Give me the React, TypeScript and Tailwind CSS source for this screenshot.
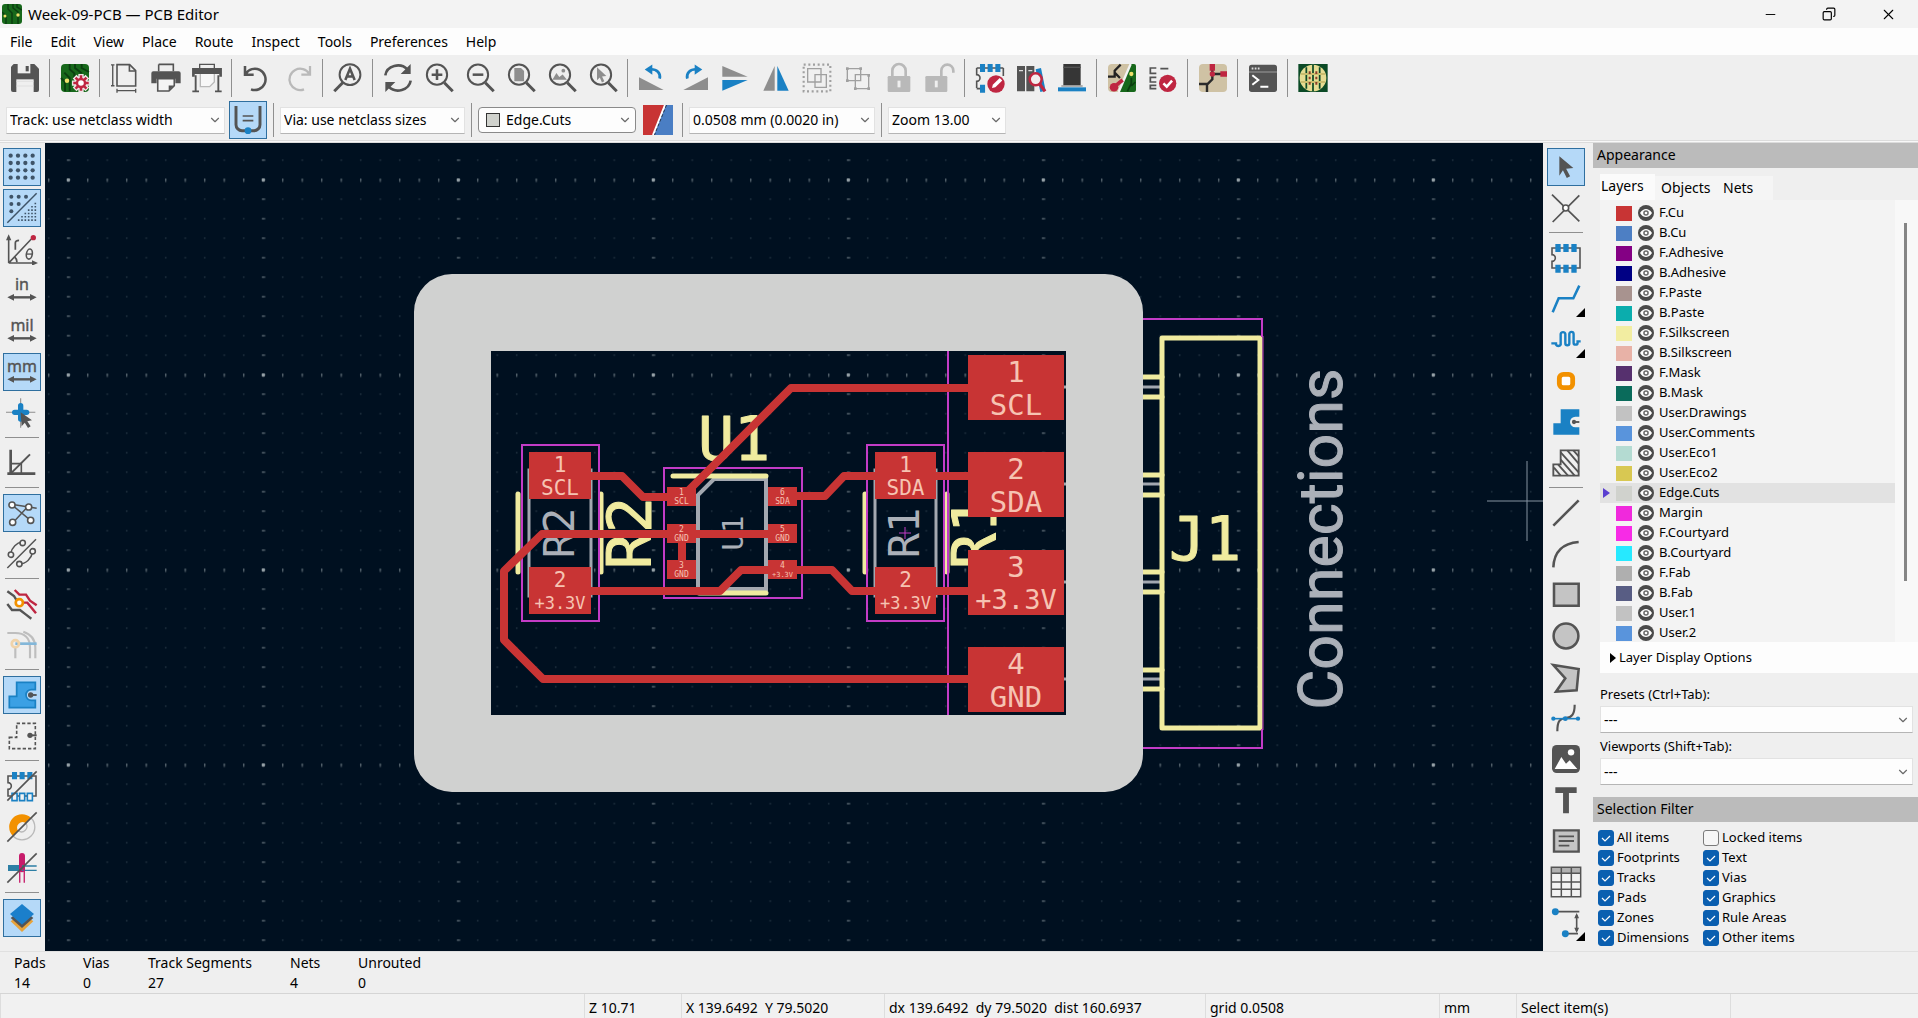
import React from "react";
import { ChevronDown, Copy, Minus, X } from "lucide-react";

const DARK = "#545454";
const BLUE = "#1a81c4";
const RED = "#bf2641";
const GRAY = "#b9b9b9";
const COPPER = "#c83434";
const SILK = "#f0eb9f";
const FAB = "#a3a8b0";
const COURTYARD = "#c33cc6";
const PAD_TEXT = "#f6c3b2";

const magnifier = (
  <g fill="none" stroke={DARK}>
    <circle cx="10.500" cy="9.500" r="7.600" strokeWidth="1.500" />
    <path d="M16 15.500 22.300 22" strokeWidth="2.200" />
  </g>
);

const zoneShape = "M2.500 13h5.500V2.500h14V8h-3a4 4 0 1 0 0 8h3v5.500h-19.500z";

const icons: Record<string, React.ReactNode> = {
  save: (
    <>
      <path d="M3.500 1.500H19l3.500 3.500v16a1.500 1.500 0 0 1-1.500 1.500H3A1.500 1.500 0 0 1 1.500 21V3.500z" fill={DARK} />
      <path d="M6.500 1.500h9.500v7H6.500z" fill="#efefef" />
      <path d="M12.500 3h2.300v4h-2.300z" fill={DARK} />
      <path d="M5.500 13h13v9.500h-13z" fill="#efefef" />
      <path d="M5.500 14.500h13M5.500 18h13" stroke="#dcdcdc" strokeWidth=".6" />
    </>
  ),
  boardSetup: (
    <>
      <rect x="1.500" y="1.500" width="21" height="21" rx="3" fill="#17681b" />
      <path d="M8 1.500v4l3.500 3v5M12 1.500v3l5 4M4 8l4 4v10M1.500 12l3 3v7M17 1.500v3l5.500 3" fill="none" stroke="#0b3f10" strokeWidth="1.400" />
      <circle cx="6" cy="14" r="1.700" fill="#efe06a" />
      <path d="M16.500 9v13.600M9.700 15.800h13.600M11.700 11l9.600 9.600M21.300 11l-9.600 9.600" stroke="#efe6e6" strokeWidth="4" />
      <path d="M16.500 10v11.600M10.700 15.800h11.600M12.400 11.700l8.200 8.200M20.600 11.700l-8.200 8.200" stroke={RED} strokeWidth="1.900" />
      <circle cx="16.500" cy="15.800" r="3" fill="#fff" stroke={RED} strokeWidth="1.800" />
    </>
  ),
  page: (
    <g fill="none" stroke={DARK}>
      <path d="M6 2h9.500l4.500 4.500V18H6z" strokeWidth="1.200" />
      <path d="M15.300 2v4.700H20" strokeWidth="1.200" />
      <path d="M2.800 2v16M1.500 2.200h2.600M1.500 17.800h2.600M6 21.500h14M6 20v3M20 20v3" />
    </g>
  ),
  print: (
    <>
      <path d="M6.500 1.800h11V7" fill="none" stroke={DARK} strokeWidth="1.200" />
      <path d="M6.500 1.800V7" stroke={DARK} strokeWidth="1.200" />
      <path d="M2.500 7h19A1.500 1.500 0 0 1 23 8.500V16h-4v-3.500H5V16H1V8.500A1.500 1.500 0 0 1 2.500 7z" fill={DARK} />
      <path d="M5.800 12.500h12.400v5.300l-4 4H5.800z" fill="#f4f4f4" stroke={DARK} strokeWidth="1.200" />
      <path d="M18 17.600h-4v4z" fill={DARK} />
    </>
  ),
  plot: (
    <>
      <path d="M6.500 5V1.800h11V5" fill="none" stroke={DARK} />
      <path d="M.8 4.500h22.400V11h-2v-2H2.800v2h-2z" fill={DARK} />
      <path d="M7 9v9.500h7l3.500-3.500V9" fill="#f7f7f7" stroke={GRAY} />
      <path d="M3.500 10v11.800M20.500 10v11.800M1 22h5M18 22h5" stroke={DARK} strokeWidth="1.400" />
    </>
  ),
  undo: <path d="M3 3v6.500h6.500M3.500 9a8 8 0 1 1 4 11.500" fill="none" stroke={DARK} strokeWidth="1.900" />,
  redo: <path d="M21 3v6.500h-6.500M20.500 9a8 8 0 1 0-4 11.500" fill="none" stroke={GRAY} strokeWidth="1.700" />,
  find: (
    <>
      <g fill="none" stroke={DARK}>
        <circle cx="13.500" cy="9.500" r="7.800" strokeWidth="1.500" />
        <path d="M8 15.500 1.700 22" strokeWidth="2.200" />
      </g>
      <path d="M10 13.500l3.500-8.500 3.500 8.500M11.200 10.800h4.600" fill="none" stroke={DARK} strokeWidth="1.900" />
    </>
  ),
  refresh: (
    <>
      <path d="M2.500 10A9.500 8.500 0 0 1 19 5.500M21.500 14A9.500 8.500 0 0 1 5 18.500" fill="none" stroke={DARK} strokeWidth="2" />
      <path d="M21.500 1.500V9H14zM2.500 22.500V15H10z" fill={DARK} />
    </>
  ),
  zoomIn: (
    <>
      {magnifier}
      <path d="M6.500 9.500h8M10.500 5.500v8" stroke={DARK} strokeWidth="1.900" />
    </>
  ),
  zoomOut: (
    <>
      {magnifier}
      <path d="M6.500 9.500h8" stroke={DARK} strokeWidth="1.900" />
    </>
  ),
  zoomFit: (
    <>
      {magnifier}
      <path d="M7 4.500h5l2.300 2.300v7.700H7z" fill="#8e8e8e" />
    </>
  ),
  zoomObjects: (
    <>
      {magnifier}
      <path d="M4.800 13.300l3-5 2.200 3 2.500-2 3.200 4z" fill="#8e8e8e" />
      <circle cx="13" cy="6.500" r="1.400" fill="#8e8e8e" />
    </>
  ),
  zoomSelection: (
    <>
      {magnifier}
      <path d="M7.500 4l7 6.500-3.200.3 1.700 3.700-1.800.8-1.600-3.700-2.100 2z" fill="#8e8e8e" />
    </>
  ),
  rotateLeft: (
    <>
      <path d="M1.500 11.500v9.500H20z" fill="#8e8e8e" />
      <path d="M17 12.500c1-4-2-7.500-7.500-7" fill="none" stroke={BLUE} strokeWidth="2" />
      <path d="M11.500 1.800v7.800L5.800 5.700z" fill={BLUE} />
    </>
  ),
  rotateRight: (
    <>
      <path d="M22.500 11.500v9.500H4z" fill="#8e8e8e" />
      <path d="M7 12.500c-1-4 2-7.500 7.500-7" fill="none" stroke={BLUE} strokeWidth="2" />
      <path d="M12.500 1.800v7.800l5.700-3.900z" fill={BLUE} />
    </>
  ),
  mirrorV: (
    <>
      <path d="M2.500 3v8h19z" fill="#8e8e8e" />
      <path d="M2.500 21.500v-8h19z" fill={BLUE} />
    </>
  ),
  mirrorH: (
    <>
      <path d="M2.500 21.500h8.500V3z" fill="#8e8e8e" />
      <path d="M21.500 21.500H13V3z" fill={BLUE} />
    </>
  ),
  group: (
    <g fill="none" stroke="#a0a0a0">
      <rect x="2" y="2" width="20" height="20" strokeWidth="1.600" strokeDasharray="1.500 2" />
      <path d="M5 5h10v10H5zM10.500 9.500H19V19h-8.500z" fill="#f0f0f0" />
    </g>
  ),
  ungroup: (
    <g fill="#f0f0f0" stroke="#a0a0a0">
      <path d="M4 5h10v9H4zM10 9.500h10V20H10z" />
      <path d="M3 4h2v2H3zM13 4h2v2h-2zM3 13h2v2H3zM19 9h2v2h-2zM9 19h2v2H9zM19 19h2v2h-2z" fill="#a0a0a0" stroke="none" />
    </g>
  ),
  lock: (
    <>
      <path d="M7 11V6.500a5 5 0 0 1 10 0V11" fill="none" stroke={GRAY} strokeWidth="2" />
      <rect x="3.500" y="10.500" width="17" height="12" rx="1" fill={GRAY} />
      <path d="M12 14v5" stroke="#efefef" strokeWidth="2.200" />
    </>
  ),
  unlock: (
    <>
      <path d="M13 11V6.500a4.500 4.500 0 0 1 9 0V8" fill="none" stroke={GRAY} strokeWidth="2" />
      <rect x="1" y="10.500" width="16.500" height="12" rx="1" fill={GRAY} />
      <path d="M9.200 14v5" stroke="#efefef" strokeWidth="2.200" />
    </>
  ),
  footprintEditor: (
    <>
      <path d="M2 4.500v5a2.500 2.500 0 0 1 0 5v5M22 4.500v6" fill="none" stroke={DARK} strokeWidth="1.200" />
      <path d="M2 4.500h20M2 20h6" stroke={DARK} strokeWidth="1.200" />
      <path d="M4.500 1.500h3.800v6H4.500zM10.200 1.500H14v6h-3.800zM16 1.500h3.800v6H16zM4.500 17h3.800v6H4.500z" fill={BLUE} />
      <circle cx="16.500" cy="16.500" r="6.500" fill={RED} />
      <path d="M13.500 19.500l.6-2.500 5.200-5 1.900 1.900-5.200 5z" fill="#fff" />
    </>
  ),
  library: (
    <>
      <path d="M1.500 3h6v19h-6zM8.500 3h6v19h-6z" fill={DARK} />
      <path d="M15.500 5.500l4-1 3.500 17-4 1z" fill={BLUE} />
      <path d="M3 6.500h3M10 6.500h3" stroke="#ddd" />
      <circle cx="15.500" cy="13" r="4.500" fill="#f3eeee" stroke={RED} strokeWidth="1.900" />
      <path d="M18.500 16.500l4 5.500" stroke={RED} strokeWidth="2.400" />
    </>
  ),
  viewer3d: (
    <>
      <path d="M5.500 1.500h13v16h-13z" fill="#363636" />
      <path d="M5.500 4h13" stroke={DARK} />
      <path d="M1.500 19h21v3h-21z" fill={BLUE} />
      <path d="M4 18h16" stroke="#8e8e8e" />
    </>
  ),
  updatePcb: (
    <>
      <rect x="1.500" y="1.500" width="21" height="21" rx="3" fill="#cfc2a4" />
      <path d="M18 1.500h3a1.500 1.500 0 0 1 1.500 1.500v18a1.500 1.500 0 0 1-1.500 1.500H10z" fill="#17681b" />
      <path d="M18.500 1.500L9.500 22.500" stroke="#f4f4f4" strokeWidth="1.800" />
      <path d="M16 22l3-6v-4M22 15l-3 3" stroke="#0b3f10" strokeWidth="1.300" fill="none" />
      <path d="M1.500 11h5V6.500L11 2M6.500 8l4 4" stroke="#222" strokeWidth="1.700" fill="none" />
      <circle cx="6" cy="19" r="3.200" fill={RED} />
      <path d="M7.500 17.500l5-4" stroke={RED} strokeWidth="2.800" />
      <circle cx="19" cy="9" r="1.600" fill="#efe06a" />
    </>
  ),
  drc: (
    <>
      <path d="M7 4.500H2.500v4H7M7 11.500H2.500v3.500H7M7 17.500H2.500V20H7M10 5h6" fill="none" stroke={DARK} strokeWidth="1.300" />
      <circle cx="15.500" cy="16" r="6.500" fill={RED} />
      <path d="M12.300 16l2.500 2.500 4-4.500" fill="none" stroke="#fff" strokeWidth="1.900" />
    </>
  ),
  schematic: (
    <>
      <rect x="1.500" y="1.500" width="21" height="21" rx="3" fill="#cfc2a4" />
      <path d="M1.500 16.500h6v6M7.500 17l4-4v-4M11.500 9V1.500M11.500 9h11" stroke="#2b2b2b" strokeWidth="1.800" fill="none" />
      <path d="M9.500 1.500h4v5h-4zM17.500 7h5v4h-5z" fill={RED} />
      <circle cx="11.500" cy="9" r="2" fill={RED} />
    </>
  ),
  console: (
    <>
      <rect x="1.500" y="2" width="21" height="20.500" rx="2" fill={DARK} />
      <path d="M3.500 4.800h6" stroke="#ddd" strokeWidth="1.500" strokeDasharray="1.300 1" />
      <path d="M1.500 7.500h21" stroke="#999" strokeWidth=".8" />
      <path d="M4 10l4.500 3.500L4 17M10 18.500h6" fill="none" stroke="#fff" strokeWidth="1.500" />
    </>
  ),
  roundTracks: (
    <>
      <path d="M1 1.500h22v21H1z" fill="#0b4a26" />
      <circle cx="12" cy="12" r="10" fill="#e5dc92" />
      <path d="M7 4v16M12 2v20M17 4v16" stroke="#0b4a26" strokeWidth="1.300" />
      <path d="M3 9h18M3 15h18" stroke="#c9bd6e" strokeWidth="1.400" />
      <path d="M9.500 7v2M9.500 11v2M9.500 15v2M14.500 7v2M14.500 11v2M14.500 15v2" stroke="#8c3d2a" strokeWidth="1.500" />
    </>
  ),
  autoTrack: (
    <>
      <path d="M3 1.500v14a4.500 4.500 0 0 0 4.500 4.500h9a4.500 4.500 0 0 0 4.500-4.500v-14" fill="none" stroke={DARK} strokeWidth="2.200" />
      <path d="M8 9h8M8 12.500h8" stroke={DARK} strokeWidth="1.200" />
      <circle cx="12" cy="20" r="2.500" fill={BLUE} />
    </>
  ),
  grid: (
    <g fill="#3f5468">
      {[3.5, 9, 14.5, 20].map((y) => [3.5, 9, 14.5, 20].map((x) => <circle key={`${x}-${y}`} cx={x} cy={y} r="1.600" />))}
    </g>
  ),
  gridOverride: (
    <>
      <path d="M1 23L23 1" stroke="#3f5468" strokeWidth="1.100" />
      <g fill="#3f5468">
        <circle cx="4" cy="3.500" r="1.500" />
        <circle cx="9.500" cy="3.500" r="1.500" />
        <circle cx="15" cy="3.500" r="1.500" />
        <circle cx="4" cy="9" r="1.500" />
        <circle cx="9.500" cy="9" r="1.500" />
        <circle cx="4" cy="14.500" r="1.500" />
      </g>
      <path d="M22 8v14M19.500 10.500V22M17 13v9M14.500 15.500V22M12 18v4M9.500 20.500V22" stroke="#3f5468" strokeWidth="1.200" strokeDasharray="1.200 1.300" />
    </>
  ),
  polar: (
    <>
      <path d="M2 22.500V3M2 22.500h20M2.500 22L19 4.500" fill="none" stroke={DARK} strokeWidth="1.200" />
      <path d="M2 1l2 4.500H0zM24 22.500l-4.500 2v-4z" fill={DARK} />
      <circle cx="20.500" cy="3.500" r="2" fill={RED} />
      <path d="M7 12.500V7.500c0-1.500 1-2 2.800-2M6.500 18c1.200 1 1.700 2.500 1.700 4" fill="none" stroke={DARK} strokeWidth="1.300" />
      <ellipse cx="17.500" cy="15.800" rx="2.200" ry="3.800" fill="none" stroke={DARK} strokeWidth="1.200" transform="rotate(10 17.500 15.800)" />
      <path d="M15.500 15.800h4" stroke={DARK} />
    </>
  ),
  cursor: (
    <>
      <path d="M11 1v22M0 11.500h22" stroke="#8e8e8e" strokeWidth=".8" />
      <path d="M11 6.500v10M6.500 11.500h9" stroke={BLUE} strokeWidth="4" strokeLinecap="round" />
      <path d="M11 11.500l8.500 6-3.500.7 2.500 3.800-2 1.300-2.400-4-2.400 2.700z" fill={DARK} />
    </>
  ),
  angle: (
    <>
      <path d="M3.500 2v18M1 20h21" stroke={DARK} strokeWidth="2" />
      <path d="M3.500 20L18 5.500" stroke={DARK} strokeWidth="1.500" />
      <path d="M4 12.500h7.500V20" fill="none" stroke={DARK} strokeWidth="1.200" />
    </>
  ),
  ratsnest: (
    <>
      <path d="M4 5.500l15.500 13M5 19.500L17 6.500M4 5.500l19 3" stroke={DARK} strokeWidth="1.100" />
      <g fill="#fff" stroke={DARK} strokeWidth="1.200">
        <circle cx="4.500" cy="6" r="2.300" />
        <circle cx="17" cy="7.500" r="2.300" />
        <circle cx="5" cy="19" r="2.300" />
        <circle cx="18.500" cy="17.500" r="2.300" />
      </g>
    </>
  ),
  curvedRatsnest: (
    <>
      <path d="M1 22.500L22.500 1M3.500 11.500C4.500 7 8 3.500 12 3M10 19.500c5 0 9-4 10-9" fill="none" stroke={DARK} strokeWidth="1.100" />
      <g fill="#f3f3f3" stroke={DARK} strokeWidth="1.200">
        <circle cx="3.700" cy="12.500" r="2" />
        <circle cx="12.500" cy="3.700" r="2" />
        <circle cx="10" cy="19.500" r="2" />
        <circle cx="20" cy="10" r="2" />
      </g>
    </>
  ),
  highContrast: (
    <>
      <path d="M1 2.500l5 3.500 3 5" fill="none" stroke={DARK} strokeWidth="1.800" />
      <path d="M6.500 1.500L10 5h5l3 4.500 5 3.500M11 11h5l6.500 8" fill="none" stroke={RED} strokeWidth="1.800" />
      <path d="M1 12l3.500 4.500h6l4.500 3.500 4 3" fill="none" stroke={DARK} strokeWidth="1.800" />
      <circle cx="10" cy="11" r="2.700" fill="#fff" stroke="#f29100" strokeWidth="2" />
    </>
  ),
  netHighlight: (
    <g opacity=".5" fill="none">
      <path d="M1 3h6c7 0 11 4 11 11v8M13 2c6 2 9 6 9 12v8M7 13v9" stroke="#8e8e8e" strokeWidth="1.600" />
      <path d="M7 11h16" stroke={BLUE} strokeWidth="2" />
      <circle cx="7" cy="11" r="2.700" stroke="#f2b866" strokeWidth="2" />
    </g>
  ),
  zoneFilled: (
    <>
      <path d={zoneShape} fill="#3ba0e4" stroke={BLUE} strokeWidth="1.300" />
      <path d="M18 12h5" stroke={DARK} strokeWidth="1.400" />
      <circle cx="18.500" cy="12" r="2" fill={DARK} />
    </>
  ),
  zoneOutline: (
    <>
      <path d="M2.500 13h5.500V2.500h14v19h-19.500z" fill="none" stroke={DARK} strokeWidth="1.200" strokeDasharray="2.500 1.500" />
      <path d="M18 11.500h5" stroke={DARK} strokeWidth="1.400" />
      <circle cx="18" cy="11.500" r="2" fill={DARK} />
    </>
  ),
  padSketch: (
    <>
      <path d="M1.500 4.500h21v15h-21v-5a2.500 2.500 0 0 0 0-5z" fill="none" stroke={DARK} strokeWidth="1.200" />
      <path d="M4.500 1.500h3.800v5.500H4.500zM10.200 1.500H14v5.500h-3.800zM16 1.500h3.800v5.500H16z" fill={BLUE} />
      <path d="M4.500 17.500h3.800V23H4.500zM10.200 17.500H14V23h-3.800zM16 17.500h3.800V23H16z" fill="#f3f3f3" stroke={BLUE} strokeWidth="1.200" />
      <path d="M1 23L23 1" stroke={DARK} strokeWidth="1.200" />
    </>
  ),
  viaSketch: (
    <>
      <path d="M5.200 18.800A9.300 9.300 0 0 1 18.800 5.200l-4 4a4 4 0 0 0-5.600 5.600z" fill="#f29100" />
      <path d="M5.200 18.800A9.300 9.300 0 0 0 18.800 5.200M9.200 14.800a4 4 0 0 0 5.600-5.600" fill="none" stroke="#b9b9b9" />
      <path d="M1 23L23 1" stroke={DARK} strokeWidth="1.200" />
    </>
  ),
  trackSketch: (
    <>
      <path d="M1.500 12H12" stroke="#2d7fa5" strokeWidth="4.500" />
      <path d="M12 13V3" stroke="#c71c6b" strokeWidth="4.500" strokeLinecap="round" />
      <path d="M12 10.500h11M12 13.800h11" stroke="#2d7fa5" />
      <path d="M10.300 13v10M13.700 13v10" stroke="#c71c6b" />
      <path d="M1 23L23 1" stroke={DARK} strokeWidth="1.200" />
    </>
  ),
  layers: (
    <>
      <path d="M12 8l8.500 6.500L12 22.500l-8.500-8z" fill="#e8a33a" />
      <path d="M12 5l8.500 7L12 19.500 3.500 12z" fill={DARK} />
      <path d="M12 1.500L21 9l-9 8-9-8z" fill="#1b7fcb" />
    </>
  ),
  arrow: <path d="M7 4l10.500 8.800-5.400.5 3 5.700-2.500 1.200-2.900-5.700L7 18.500z" fill={DARK} />,
  localRatsnest: (
    <>
      <path d="M1.500 2L22 22M22 2.500L2 22.500" stroke={DARK} strokeWidth="1.300" />
      <circle cx="11.800" cy="12" r="2.200" fill="#fff" stroke={DARK} strokeWidth="1.200" />
    </>
  ),
  footprint: (
    <>
      <path d="M1.500 4.500h21v15h-21v-5a2.500 2.500 0 0 0 0-5z" fill="none" stroke={DARK} strokeWidth="1.200" />
      <path d="M4 1.500h4v6H4zM10 1.500h4v6h-4zM16 1.500h4v6h-4zM4 17h4v6H4zM10 17h4v6h-4zM16 17h4v6h-4z" fill={BLUE} />
    </>
  ),
  route: <path d="M2 22l4.500-10.500h11L22 2" fill="none" stroke={BLUE} strokeWidth="1.900" />,
  tune: (
    <path
      d="M1 14.500h3.500v1a2 2 0 0 0 3.500 0v-8a1.800 1.800 0 0 1 3.500 0v7a1.500 1.500 0 0 0 3 0v-7a1.600 1.600 0 0 1 3.200 0v6.500a1.500 1.500 0 0 0 3 0v-1H23"
      fill="none"
      stroke={BLUE}
      strokeWidth="1.800"
    />
  ),
  via: <rect x="7" y="7" width="10" height="10" rx="3" fill="#fff" stroke="#f29100" strokeWidth="3.600" />,
  zone: (
    <>
      <path d={zoneShape} fill={BLUE} />
      <path d="M18 12h4" stroke={DARK} strokeWidth="1.400" />
      <circle cx="18" cy="12" r="1.600" fill={DARK} />
    </>
  ),
  ruleArea: (
    <g stroke={DARK} fill="none">
      <path d="M2.500 13h5.500V2.500h13.500v19h-19z" strokeWidth="1.400" />
      <path d="M8 4l13.500 15M13 2.500l8.500 10M8 9.500L18.500 21.500M6 13l7.500 8.500M3 15.500l5 6M17.500 2.500l4 4.500" strokeWidth="1.400" />
    </g>
  ),
  line: <path d="M2.500 21.500l19-19" stroke={DARK} strokeWidth="1.900" />,
  arc: <path d="M2.500 22C3 11 9 4 21.500 3" fill="none" stroke={DARK} strokeWidth="1.900" />,
  rect: <path d="M3 3.500h18.500v16.500H3z" fill="#c4c4c4" stroke={DARK} strokeWidth="1.900" />,
  circle: <circle cx="12" cy="12" r="9.300" fill="#c4c4c4" stroke={DARK} strokeWidth="1.900" />,
  polygon: <path d="M2.500 3l19 3-1.500 16-15.500 1 7-10z" fill="#c4c4c4" stroke={DARK} strokeWidth="1.900" />,
  bezier: (
    <>
      <path d="M5.500 22c0-8 2-9.500 6.500-10S18.500 9 18.500 2" fill="none" stroke={DARK} strokeWidth="1.600" />
      <path d="M1.500 12.500h20" stroke={BLUE} strokeWidth="1.200" />
      <g fill={BLUE}>
        <circle cx="2.500" cy="12.500" r="1.600" />
        <circle cx="11.500" cy="12.500" r="1.800" />
        <circle cx="21" cy="12.500" r="1.600" />
      </g>
    </>
  ),
  image: (
    <>
      <rect x="1.500" y="1.500" width="21" height="21" rx="3.500" fill={DARK} />
      <path d="M3.500 19.500l5-9 3.500 5 2.800-2.500 5.700 6.500z" fill="#fff" />
      <circle cx="15.800" cy="7" r="2.400" fill="#fff" />
    </>
  ),
  text: <path d="M4 2.500h16v4.200h-5.800v15.300H9.800V6.700H4z" fill={DARK} />,
  textBox: (
    <>
      <path d="M3 4h18.500v16H3z" fill="#c4c4c4" stroke={DARK} strokeWidth="1.800" />
      <path d="M6.500 8.500H18M6.500 12H18M6.500 15.500h8" stroke={DARK} strokeWidth="1.400" />
    </>
  ),
  table: (
    <>
      <path d="M1 1h22v22H1z" fill="#f2f2f2" />
      <path d="M1 1h22v4.500H1z" fill="#b0b0b0" />
      <path d="M1 1h22v22H1zM1 5.500h22M1 12h22M1 17.500h22M8.500 1v22M16 1v22" fill="none" stroke={DARK} strokeWidth="1.100" />
    </>
  ),
  dimension: (
    <>
      <path d="M3 3.500h19M11 20h10M20 6v12" stroke={DARK} strokeWidth="1.200" />
      <path d="M20 4.500l1.800 4h-3.600zM20 19.500l1.800-4h-3.600z" fill={DARK} />
      <circle cx="4" cy="3.500" r="2.600" fill={BLUE} />
      <circle cx="11.500" cy="20" r="2.600" fill={BLUE} />
    </>
  ),
};

function Icon({ name }: { name: string }) {
  if (name === "in" || name === "mil" || name === "mm") {
    return (
      <svg viewBox="0 0 24 24" className="size-8 overflow-visible" aria-hidden="true">
        <text x="12" y="12" textAnchor="middle" fontFamily="Noto Sans, sans-serif" fontSize="12" fill={DARK} stroke={DARK} strokeWidth=".3">
          {name}
        </text>
        <path d="M3 17.500h18" stroke={DARK} strokeWidth="1.800" />
        <path d="M1 17.500l5-2.500v5zM23 17.500l-5-2.500v5z" fill={DARK} />
      </svg>
    );
  }
  return (
    <svg viewBox="0 0 24 24" className="size-8" aria-hidden="true">
      {icons[name]}
    </svg>
  );
}

const topGroups = [
  ["save"],
  ["boardSetup"],
  ["page", "print", "plot"],
  ["undo", "redo"],
  ["find"],
  ["refresh", "zoomIn", "zoomOut", "zoomFit", "zoomObjects", "zoomSelection"],
  ["rotateLeft", "rotateRight", "mirrorV", "mirrorH", "group", "ungroup", "lock", "unlock"],
  ["footprintEditor", "library", "viewer3d"],
  ["updatePcb", "drc"],
  ["schematic"],
  ["console"],
  ["roundTracks"],
];

const leftGroups = [
  ["grid", "gridOverride", "polar", "in", "mil", "mm", "cursor"],
  ["angle"],
  ["ratsnest", "curvedRatsnest"],
  ["highContrast", "netHighlight"],
  ["zoneFilled", "zoneOutline"],
  ["padSketch", "viaSketch", "trackSketch"],
  ["layers"],
];

const rightGroups = [
  ["arrow", "localRatsnest"],
  ["footprint", "route", "tune", "via", "zone", "ruleArea"],
  ["line", "arc", "rect", "circle", "polygon", "bezier", "image", "text", "textBox", "table", "dimension"],
];

const pressed = ["grid", "gridOverride", "mm", "ratsnest", "zoneFilled", "layers", "arrow"];
const withMenu = ["route", "tune", "dimension"];

function TopToolbar() {
  return (
    <div className="flex h-[45px] shrink-0 items-center bg-[#efefef] pl-1">
      {topGroups.map((group, i) => (
        <React.Fragment key={i}>
          {i > 0 && (
            <span className="flex h-[38px] w-[9px] justify-center">
              <span className="w-px bg-[#8f8f8f]" />
            </span>
          )}
          {group.map((name) => (
            <button key={name} aria-label={name} className="flex h-10 w-[41px] items-center justify-center">
              <Icon name={name} />
            </button>
          ))}
        </React.Fragment>
      ))}
    </div>
  );
}

function Rail({ groups, className }: { groups: string[][]; className: string }) {
  return (
    <div className={"flex w-[45px] shrink-0 flex-col items-center overflow-hidden bg-[#efefef] pt-[3px] " + className}>
      {groups.map((group, i) => (
        <React.Fragment key={i}>
          {i > 0 && (
            <span className="flex h-[9px] w-[34px] shrink-0 flex-col justify-center">
              <span className="h-px bg-[#8f8f8f]" />
            </span>
          )}
          {group.map((name) => (
            <div key={name} className="flex h-[41px] shrink-0 items-center">
              <button
                aria-label={name}
                className={
                  "relative flex size-[38px] items-center justify-center border " +
                  (pressed.includes(name) ? "border-[#2f6f9f] bg-[#b5d9f8]" : "border-transparent")
                }
              >
                <Icon name={name} />
                {withMenu.includes(name) && (
                  <svg viewBox="0 0 9 9" className="absolute -right-px bottom-0 size-[9px]">
                    <path d="M9 0v9H0z" fill="#000" />
                  </svg>
                )}
              </button>
            </div>
          ))}
        </React.Fragment>
      ))}
    </div>
  );
}

function Dropdown({ label, value, className }: { label: string; value: string; className: string }) {
  return (
    <div className={"grid h-[27px] items-center border border-[#e2e2e2] border-b-[#b5b5b5] bg-[#fdfdfd] " + className}>
      <select
        aria-label={label}
        className="col-start-1 row-start-1 w-full appearance-none bg-transparent pl-[3px] text-sm text-black outline-none"
      >
        <option>{value}</option>
      </select>
      <ChevronDown className="pointer-events-none col-start-1 row-start-1 mr-[2px] size-[14px] justify-self-end text-[#6b6b6b]" />
    </div>
  );
}

function Divider() {
  return <span className="mx-[6px] h-[34px] w-px bg-[#8f8f8f]" />;
}

function OptionsToolbar() {
  return (
    <div className="flex h-[40px] shrink-0 items-center bg-[#efefef] pl-[6px]">
      <Dropdown label="Track width" value="Track: use netclass width" className="mr-1 w-[219px]" />
      <button aria-label="Automatic track width" className="flex size-[38px] items-center justify-center border border-[#2f6f9f] bg-[#b5d9f8]">
        <Icon name="autoTrack" />
      </button>
      <Divider />
      <Dropdown label="Via size" value="Via: use netclass sizes" className="w-[185px]" />
      <Divider />
      <div className="grid h-[26px] w-[158px] items-center rounded-sm border border-[#8a8a8a] bg-[#fdfdfd]">
        <span className="pointer-events-none col-start-1 row-start-1 ml-[7px] size-[14px] border border-[#333] bg-[#d0d2cd]" />
        <select aria-label="Active layer" className="col-start-1 row-start-1 w-full appearance-none bg-transparent pl-[27px] text-sm outline-none">
          <option>Edge.Cuts</option>
        </select>
        <ChevronDown className="pointer-events-none col-start-1 row-start-1 mr-[3px] size-[14px] justify-self-end text-[#6b6b6b]" />
      </div>
      <button aria-label="Layer pair" className="mr-[3px] ml-[7px]">
        <svg viewBox="0 0 30 30" className="size-[30px]">
          <path d="M0 0h30v30H0z" fill="#4a7ec4" />
          <path d="M0 0h22L10 30H0z" fill="#c83434" />
          <path d="M22 0L10 30" stroke="#fff" strokeWidth="2" />
          <path d="M23.500 0L11.500 30" stroke="#26364d" strokeDasharray="3 2" />
        </svg>
      </button>
      <Divider />
      <Dropdown label="Grid" value="0.0508 mm (0.0020 in)" className="w-[186px]" />
      <Divider />
      <Dropdown label="Zoom" value="Zoom 13.00" className="w-[118px]" />
    </div>
  );
}

const MONO = "DejaVu Sans Mono, monospace";

type PadProps = { x: number; y: number; w: number; h: number; num: string; net: string; size: number; netSize: number };

function Pad({ x, y, w, h, num, net, size, netSize }: PadProps) {
  const cx = x + w / 2;
  return (
    <g fontFamily={MONO} fill={PAD_TEXT} textAnchor="middle">
      <rect x={x} y={y} width={w} height={h} fill={COPPER} />
      <text x={cx} y={y + h * 0.26 + size * 0.36} fontSize={size}>
        {num}
      </text>
      <text x={cx} y={y + h * 0.76 + netSize * 0.36} fontSize={netSize}>
        {net}
      </text>
    </g>
  );
}

const headerPads = [
  { num: "1", net: "SCL", y: 355 },
  { num: "2", net: "SDA", y: 452 },
  { num: "3", net: "+3.3V", y: 550 },
  { num: "4", net: "GND", y: 647 },
];

const chipPads = [
  { num: "1", net: "SCL", x: 667, y: 487 },
  { num: "2", net: "GND", x: 667, y: 524 },
  { num: "3", net: "GND", x: 667, y: 560 },
  { num: "6", net: "SDA", x: 768, y: 487 },
  { num: "5", net: "GND", x: 768, y: 524 },
  { num: "4", net: "+3.3V", x: 768, y: 560 },
];

function Board() {
  return (
    <svg viewBox="45 143 1498 808" preserveAspectRatio="xMidYMid slice" className="h-full w-full bg-[#001020]">
      <defs>
        <pattern id="minor" x="58.800" y="150.500" width="19.500" height="19.500" patternUnits="userSpaceOnUse">
          <rect x="8.700" y="9.200" width="1.500" height="1" fill="#31424f" />
        </pattern>
        <pattern id="column" x="58.800" y="150.500" width="195" height="19.500" patternUnits="userSpaceOnUse">
          <rect x="8" y="9.200" width="3.500" height="1" fill="#66737c" />
        </pattern>
        <pattern id="row" x="58.800" y="170.500" width="19.500" height="195" patternUnits="userSpaceOnUse">
          <rect x="9" y="8" width="1" height="3.500" fill="#66737c" />
        </pattern>
        <pattern id="major" x="58.800" y="170.500" width="195" height="195" patternUnits="userSpaceOnUse">
          <rect x="8" y="8" width="3" height="3" fill="#96a1a7" />
        </pattern>
      </defs>
      {["url(#minor)", "url(#column)", "url(#row)", "url(#major)"].map((fill) => (
        <rect key={fill} x="45" y="143" width="1498" height="808" fill={fill} />
      ))}

      <g fill="none" stroke={FAB} strokeWidth="3">
        <path d="M529 470h62v126h-62zM875 470h61v126h-61z" />
        <path d="M714 479h52v110h-68v-94z" strokeWidth="4" />
        <path d="M1064 387h4M1064 484h4M1064 582h4M1064 679h4M1142 387h20M1142 484h20M1142 582h20M1142 679h20" />
      </g>
      <g fill="none" stroke={SILK} strokeWidth="5" strokeLinecap="round">
        <path d="M518 494v78M601 494v78M865 494v78M947 494v78M673 476h93M699 593h67" />
        <path d="M1142 377h20M1142 397h20M1142 475h20M1142 495h20M1142 572h20M1142 592h20M1142 670h20M1142 689h20" />
        <path d="M1162 338h98v390h-98z" strokeLinejoin="round" />
      </g>
      <g fill={SILK} stroke={SILK} strokeWidth="1" strokeLinejoin="round" fontFamily={MONO} fontSize="60" textAnchor="middle">
        <text x="734" y="460">U1</text>
        <text x="1205" y="560">J1</text>
        <text transform="translate(651 533) rotate(-90)">R2</text>
        <text transform="translate(996 533) rotate(-90)">R1</text>
      </g>
      <g fill="#abb0b8" fontFamily={MONO} fontSize="42" textAnchor="middle">
        <text transform="translate(574 533) rotate(-90)">R2</text>
        <text transform="translate(919 533) rotate(-90)">R1</text>
        <text transform="translate(743 533) rotate(-90)" fontSize="29">U1</text>
        <text
          transform="translate(1342 539) rotate(-90)"
          fontFamily="Roboto, sans-serif"
          fontSize="61"
          stroke="#abb0b8"
          strokeWidth="1"
          strokeLinejoin="round"
        >
          Connections
        </text>
      </g>
      <g fill="none" stroke={COURTYARD} strokeWidth="2">
        <path d="M522 445h77v176h-77zM867 445h77v176h-77zM664 468h138v130H664zM948 351v364M1142 319h120v18M1262 729v19h-120" />
        <path d="M899 533h12M905 527v12M1263 336v394" strokeWidth="1" />
      </g>

      <g fill="none" stroke={COPPER} strokeWidth="8" strokeLinejoin="round" strokeLinecap="round">
        <path d="M1016 388H791L684 495" />
        <path d="M560 476h62l21 21h39" />
        <path d="M782 534H542l-38 37v69l39 39h473" />
        <path d="M682 534v36" />
        <path d="M560 591h160l21-21h41" />
        <path d="M782 570h50l20 21h164" />
        <path d="M782 496h43l19-20h172" />
      </g>
      <Pad x={529} y={452} w={62} h={47} num="1" net="SCL" size={21} netSize={21} />
      <Pad x={529} y={567} w={62} h={47} num="2" net="+3.3V" size={21} netSize={17} />
      <Pad x={875} y={452} w={61} h={47} num="1" net="SDA" size={21} netSize={21} />
      <Pad x={875} y={567} w={61} h={47} num="2" net="+3.3V" size={21} netSize={17} />
      {chipPads.map((p) => (
        <Pad key={p.num} {...p} w={29} h={19} size={8} netSize={p.net === "+3.3V" ? 7 : 8} />
      ))}
      {headerPads.map((p) => (
        <Pad key={p.num} {...p} x={968} w={96} h={65} size={29} netSize={p.net === "+3.3V" ? 27 : 29} />
      ))}

      <path
        fillRule="evenodd"
        fill="#d0d1d0"
        d="M452 274h653a38 38 0 0 1 38 38v442a38 38 0 0 1-38 38H452a38 38 0 0 1-38-38V312a38 38 0 0 1 38-38zM491 351v364h575V351z"
      />
      <path d="M1487 501h56M1527 461v80" stroke="#8593a0" strokeWidth="1" />
    </svg>
  );
}

const layers = [
  ["F.Cu", "#c83434"],
  ["B.Cu", "#4d7fc4"],
  ["F.Adhesive", "#840084"],
  ["B.Adhesive", "#000084"],
  ["F.Paste", "#a8938f"],
  ["B.Paste", "#0badad"],
  ["F.Silkscreen", "#f2eda1"],
  ["B.Silkscreen", "#e8b2a7"],
  ["F.Mask", "#56306e"],
  ["B.Mask", "#0a6b5b"],
  ["User.Drawings", "#c2c2c2"],
  ["User.Comments", "#5994dc"],
  ["User.Eco1", "#b4dbd2"],
  ["User.Eco2", "#d8c852"],
  ["Edge.Cuts", "#d0d2cd"],
  ["Margin", "#f029dc"],
  ["F.Courtyard", "#f72be6"],
  ["B.Courtyard", "#26e9ff"],
  ["F.Fab", "#afafaf"],
  ["B.Fab", "#585d84"],
  ["User.1", "#c2c2c2"],
  ["User.2", "#5994dc"],
];

function LayerRow({ name, color }: { name: string; color: string }) {
  const active = name === "Edge.Cuts";
  return (
    <li className={"flex h-5 items-center pl-[3px] text-[13px] " + (active ? "bg-[#e2e2e2]" : "")}>
      <span className="w-[13px]">
        {active && (
          <svg viewBox="0 0 7 10" className="h-[10px] w-[7px]">
            <path d="M0 0l7 5-7 5z" fill="#5a3fd0" />
          </svg>
        )}
      </span>
      <span className="h-[15px] w-4" style={{ backgroundColor: color }} />
      <button aria-label={`Toggle ${name}`} className="ml-[6px]">
        <svg viewBox="0 0 16 16" className="size-4">
          <circle cx="8" cy="8" r="8" fill="#4a4a4a" />
          <path d="M2 8c2-3 4-4 6-4s4 1 6 4c-2 3-4 4-6 4s-4-1-6-4z" fill="#fff" />
          <circle cx="8" cy="8" r="2.800" fill="#6a6a6a" />
          <circle cx="8" cy="8" r="1.300" fill="#fff" />
        </svg>
      </button>
      <span className="ml-[5px]">{name}</span>
    </li>
  );
}

const filters = [
  "All items", "Locked items", "Footprints", "Text", "Tracks", "Vias",
  "Pads", "Graphics", "Zones", "Rule Areas", "Dimensions", "Other items",
];

function SidePanel() {
  return (
    <aside className="ml-[5px] flex w-[325px] shrink-0 flex-col bg-[#efefef]">
      <h2 className="h-[25px] bg-[#bbbbbb] pl-1 text-sm leading-6">Appearance</h2>
      <div className="flex h-8 items-end pt-[6px] pl-[7px] text-sm">
        <button className="h-[26px] w-[55px] bg-[#fbfbfb] pb-[2px] pl-px text-left leading-5">Layers</button>
        <button className="h-6 w-[62px] bg-[#f5f5f5] pl-[6px] text-left">Objects</button>
        <button className="h-6 w-[56px] bg-[#f5f5f5] pl-[6px] text-left">Nets</button>
      </div>
      <div className="ml-[7px] flex h-[442px] overflow-hidden bg-[#f8f8f8]">
        <ul className="w-[295px] bg-[#f3f3f3] pt-[3px]">
          {layers.map(([name, color]) => (
            <LayerRow key={name} name={name} color={color} />
          ))}
        </ul>
        <span className="mt-[23px] ml-[9px] h-[358px] w-[3px] bg-[#858585]" />
      </div>
      <button className="ml-[7px] flex h-[31px] items-center bg-[#fdfdfd] pl-[10px] text-[13px]">
        <svg viewBox="0 0 6 10" className="mr-[3px] h-[10px] w-[6px]">
          <path d="M0 0l6 5-6 5z" />
        </svg>
        Layer Display Options
      </button>
      <div className="flex flex-col pt-[11px] pr-[5px] pl-[7px] text-[13px]">
        <span className="h-[22px] leading-5">Presets (Ctrl+Tab):</span>
        <Dropdown label="Presets (Ctrl+Tab)" value="---" className="w-full" />
        <span className="mt-[3px] h-[22px] leading-5">Viewports (Shift+Tab):</span>
        <Dropdown label="Viewports (Shift+Tab)" value="---" className="w-full" />
      </div>
      <h2 className="mt-3 h-[25px] bg-[#bbbbbb] pl-1 text-sm leading-6">Selection Filter</h2>
      <div className="mt-[6px] grid grid-cols-[105px_1fr] pl-[5px] text-[13px]">
        {filters.map((name) => (
          <label key={name} className="flex h-5 items-center gap-[3px]">
            <span className="grid">
              <input
                type="checkbox"
                defaultChecked={name !== "Locked items"}
                className="peer col-start-1 row-start-1 size-4 appearance-none rounded-[3px] border border-[#7a7a7a] bg-[#f6f6f6] checked:border-[#0b5fb0] checked:bg-[#0b5fb0]"
              />
              <svg viewBox="0 0 16 16" className="pointer-events-none invisible col-start-1 row-start-1 size-4 peer-checked:visible">
                <path d="M4 8l3 3 5-5" fill="none" stroke="#fff" strokeWidth="1.200" />
              </svg>
            </span>
            {name}
          </label>
        ))}
      </div>
    </aside>
  );
}

function Stat({ label, value, className }: { label: string; value: string; className: string }) {
  return (
    <div className={"flex flex-col " + className}>
      <span>{label}</span>
      <span>{value}</span>
    </div>
  );
}

export default function App() {
  return (
    <div className="flex h-screen min-h-[900px] flex-col overflow-hidden bg-[#efefef] font-['Noto_Sans',sans-serif] text-black">
      <header className="flex h-7 shrink-0 items-center bg-[#f3f3f3]">
        <svg viewBox="0 0 20 20" className="ml-[2px] size-5">
          <rect width="20" height="20" rx="3" fill="#17681b" />
          <path d="M6 0v5l4 4v11M11 0v4l5 4v12M0 8l4 4v8M15 0v3l5 3" fill="none" stroke="#0b3f10" strokeWidth="1.500" />
          <circle cx="3" cy="12" r="1.500" fill="#efe06a" />
          <circle cx="16" cy="11" r="1.700" fill="#efe06a" />
        </svg>
        <h1 className="ml-[6px] text-[15px]">Week-09-PCB — PCB Editor</h1>
        <div className="ml-auto flex items-center gap-11 pr-[21px]">
          <button aria-label="Minimize"><Minus className="size-[15px]" strokeWidth={1.5} /></button>
          <button aria-label="Restore"><Copy className="size-[14px] -scale-x-100" strokeWidth={2} /></button>
          <button aria-label="Close"><X className="size-[17px]" strokeWidth={1.5} /></button>
        </div>
      </header>
      <nav className="flex h-[27px] shrink-0 items-center gap-[18px] bg-[#fdfdfd] pl-[10px] text-sm">
        {["File", "Edit", "View", "Place", "Route", "Inspect", "Tools", "Preferences", "Help"].map((item) => (
          <button key={item}>{item}</button>
        ))}
      </nav>
      <TopToolbar />
      <OptionsToolbar />
      <div className="h-[3px] shrink-0 border-y border-[#dcdcdc] bg-[#f8f8f8]" />
      <main className="flex min-h-0 flex-1">
        <Rail groups={leftGroups} className="pr-px" />
        <div className="min-w-0 flex-1 overflow-hidden">
          <Board />
        </div>
        <Rail groups={rightGroups} className="" />
        <SidePanel />
      </main>
      <section className="flex h-[42px] shrink-0 border-t border-[#e0e0e0] pt-px pl-[14px] text-sm leading-5">
        <Stat label="Pads" value="14" className="w-[69px]" />
        <Stat label="Vias" value="0" className="w-[65px]" />
        <Stat label="Track Segments" value="27" className="w-[142px]" />
        <Stat label="Nets" value="4" className="w-[68px]" />
        <Stat label="Unrouted" value="0" className="" />
      </section>
      <footer className="flex h-[25px] shrink-0 items-center border-t border-[#d5d5d5] bg-[#f1f1f1] text-sm whitespace-pre *:h-full *:border-l *:border-[#dddddd] *:pl-1 *:leading-[27px]">
        <span className="w-[584px]" />
        <span className="w-[97px]">Z 10.71</span>
        <span className="w-[203px]">X 139.6492  Y 79.5020</span>
        <span className="w-[321px]">dx 139.6492  dy 79.5020  dist 160.6937</span>
        <span className="w-[234px]">grid 0.0508</span>
        <span className="w-[77px]">mm</span>
        <span className="w-[214px]">Select item(s)</span>
        <span className="flex-1" />
      </footer>
    </div>
  );
}
